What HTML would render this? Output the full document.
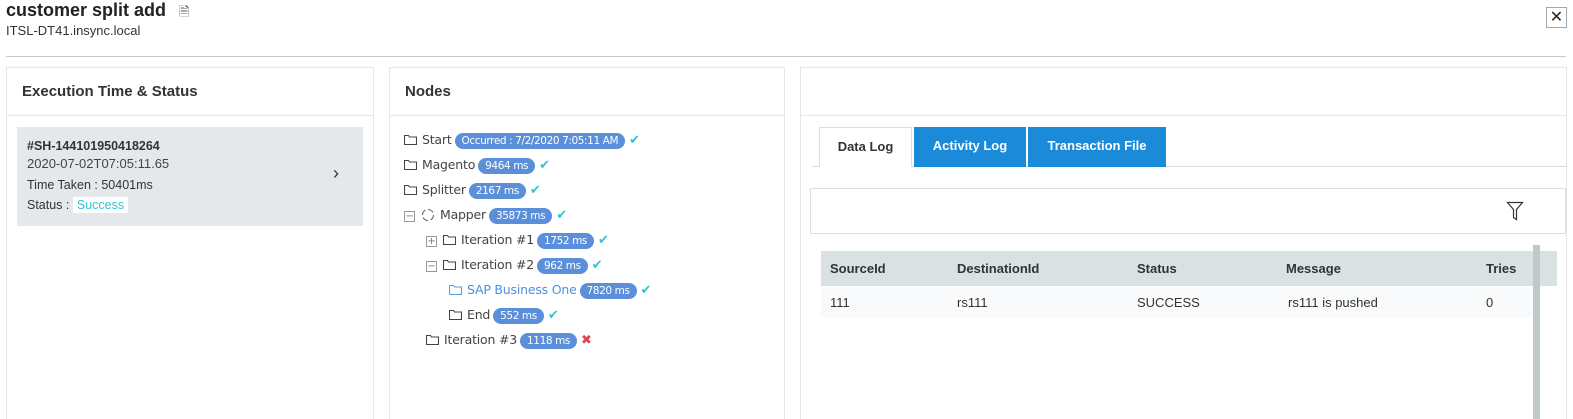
<!DOCTYPE html>
<html style="height:419px;overflow:hidden"><head><style>
body{margin:0;width:1573px;height:419px;overflow:hidden;background:#fff;font-family:"Liberation Sans",sans-serif;color:#333;position:relative}
.a{position:absolute}
.panel{position:absolute;top:67px;height:352px;border:1px solid #e6e6e6;border-bottom:none;box-sizing:border-box}
.ph{position:absolute;left:0;right:0;top:0;height:47px;border-bottom:1px solid #e6e6e6}
.ph span{position:absolute;left:15px;top:15px;font-weight:bold;font-size:15px;color:#333}
.tree{font-size:12.5px;color:#444;font-family:"DejaVu Sans",sans-serif;letter-spacing:-0.2px}
.row{position:absolute;height:18px;line-height:18px;white-space:nowrap}
.fold{display:inline-block;vertical-align:-1px;margin-right:5px}
.b{display:inline-block;background:#5b8fd9;color:#fff;border-radius:9px;padding:0 7px;font-size:10.5px;line-height:16px;height:16px;margin-left:3px;vertical-align:0;letter-spacing:-0.4px}
.ck{color:#2ec4d4;font-size:13px;margin-left:4px}
.tg{display:inline-block;width:9px;height:9px;border:1px solid #999;margin-right:6px;position:relative;vertical-align:0;font-size:10px;line-height:9px;text-align:center;color:#777}
</style></head><body>
<div class="a" style="left:6px;top:0;font-size:18px;font-weight:bold;color:#222">customer split add <span style="font-weight:normal;font-size:13px;color:#555;margin-left:8px">&#128462;</span></div>
<div class="a" style="left:6px;top:23px;font-size:13px;color:#333">ITSL-DT41.insync.local</div>
<div class="a" style="left:1546px;top:7px;width:19px;height:19px;border:1px solid #9aabb8;text-align:center;line-height:19px;font-size:16px;color:#222">✕</div>
<div class="a" style="left:6px;top:56px;width:1560px;height:1px;background:#c8c8c8"></div>

<div class="panel" style="left:6px;width:368px">
 <div class="ph"><span>Execution Time &amp; Status</span></div>
 <div class="a" style="left:10px;top:59px;width:346px;height:99px;background:#e5e8eb">
  <div class="a" style="left:10px;top:12px;font-size:12.5px;font-weight:bold;color:#333">#SH-144101950418264</div>
  <div class="a" style="left:10px;top:29px;font-size:13px;color:#444">2020-07-02T07:05:11.65</div>
  <div class="a" style="left:10px;top:51px;font-size:12.5px;color:#333">Time Taken : 50401ms</div>
  <div class="a" style="left:10px;top:71px;font-size:12.5px;color:#333">Status : <span style="background:#fff;color:#36c2d6;padding:1px 4px">Success</span></div>
  <div class="a" style="left:316px;top:36px;font-size:18px;color:#333">&#8250;</div>
 </div>
</div>

<div class="panel" style="left:389px;width:396px">
 <div class="ph"><span>Nodes</span></div>
</div>
<svg width="0" height="0" style="position:absolute"><defs><symbol id="f" viewBox="0 0 13 11"><path d="M0.5 1.5h4l1 1.5h7v7.5h-12z" fill="none" stroke="#444" stroke-width="1.1"/></symbol><symbol id="fb" viewBox="0 0 13 11"><path d="M0.5 1.5h4l1 1.5h7v7.5h-12z" fill="none" stroke="#5b9de0" stroke-width="1.1"/></symbol></defs></svg>
<div class="tree">
<div class="row" style="left:404px;top:131px"><svg class="fold" width="13" height="11"><use href="#f"/></svg>Start<span class="b">Occurred : 7/2/2020 7:05:11 AM</span><span class="ck">✔</span></div>
<div class="row" style="left:404px;top:156px"><svg class="fold" width="13" height="11"><use href="#f"/></svg>Magento<span class="b">9464 ms</span><span class="ck">✔</span></div>
<div class="row" style="left:404px;top:181px"><svg class="fold" width="13" height="11"><use href="#f"/></svg>Splitter<span class="b">2167 ms</span><span class="ck">✔</span></div>
<div class="row" style="left:404px;top:206px"><span class="tg">−</span><svg class="fold" width="14" height="14" style="vertical-align:-3px"><path d="M7 1.5a5.5 5.5 0 0 1 5.5 5.5M12.5 7a5.5 5.5 0 0 1-5.5 5.5M7 12.5a5.5 5.5 0 0 1-5.5-5.5M1.5 7a5.5 5.5 0 0 1 5.5-5.5" fill="none" stroke="#666" stroke-width="1.1" stroke-dasharray="6 2.6"/></svg>Mapper<span class="b">35873 ms</span><span class="ck">✔</span></div>
<div class="row" style="left:426px;top:231px"><span class="tg">+</span><svg class="fold" width="13" height="11"><use href="#f"/></svg>Iteration #1<span class="b">1752 ms</span><span class="ck">✔</span></div>
<div class="row" style="left:426px;top:256px"><span class="tg">−</span><svg class="fold" width="13" height="11"><use href="#f"/></svg>Iteration #2<span class="b">962 ms</span><span class="ck">✔</span></div>
<div class="row" style="left:449px;top:281px;color:#4a90e2"><svg class="fold" width="13" height="11"><use href="#fb"/></svg>SAP Business One<span class="b">7820 ms</span><span class="ck">✔</span></div>
<div class="row" style="left:449px;top:306px"><svg class="fold" width="13" height="11"><use href="#f"/></svg>End<span class="b">552 ms</span><span class="ck">✔</span></div>
<div class="row" style="left:426px;top:331px"><svg class="fold" width="13" height="11"><use href="#f"/></svg>Iteration #3<span class="b">1118 ms</span><span class="ck" style="color:#e0454f">✖</span></div>
</div>

<div class="panel" style="left:800px;width:767px">
 <div class="ph"></div>
</div>
<div class="a" style="left:812px;top:166px;width:754px;height:1px;background:#dcdcdc"></div>
<div class="a" style="left:819px;top:127px;width:93px;height:40px;border:1px solid #ddd;border-bottom:none;background:#fff;box-sizing:border-box;text-align:center;line-height:38px;font-size:13px;font-weight:bold;color:#333">Data Log</div>
<div class="a" style="left:914px;top:127px;width:112px;height:40px;background:#1b8ad8;color:#fff;text-align:center;line-height:38px;font-size:13px;font-weight:bold">Activity Log</div>
<div class="a" style="left:1028px;top:127px;width:138px;height:40px;background:#1b8ad8;color:#fff;text-align:center;line-height:38px;font-size:13px;font-weight:bold">Transaction File</div>
<div class="a" style="left:810px;top:188px;width:756px;height:46px;border:1px solid #ddd;box-sizing:border-box"></div>
<svg class="a" style="left:1506px;top:201px" width="18" height="20"><path d="M1.5 1.5h15l-6 7v10l-3-2v-8z" fill="none" stroke="#333" stroke-width="1.2"/></svg>
<div class="a" style="left:821px;top:251px;width:736px;height:35px;background:#dae1e3"></div>
<div class="a" style="left:821px;top:287px;width:715px;height:30px;background:#f8fafb"></div>
<div class="a" style="left:1533px;top:245px;width:7px;height:174px;background:#bfc8ca"></div>
<div style="font-size:13px;color:#333">
<div class="a" style="left:830px;top:261px;font-weight:bold">SourceId</div>
<div class="a" style="left:957px;top:261px;font-weight:bold">DestinationId</div>
<div class="a" style="left:1137px;top:261px;font-weight:bold">Status</div>
<div class="a" style="left:1286px;top:261px;font-weight:bold">Message</div>
<div class="a" style="left:1486px;top:261px;font-weight:bold">Tries</div>
<div class="a" style="left:830px;top:295px">111</div>
<div class="a" style="left:957px;top:295px">rs111</div>
<div class="a" style="left:1137px;top:295px">SUCCESS</div>
<div class="a" style="left:1288px;top:295px">rs111 is pushed</div>
<div class="a" style="left:1486px;top:295px">0</div>
</div>
</body></html>
